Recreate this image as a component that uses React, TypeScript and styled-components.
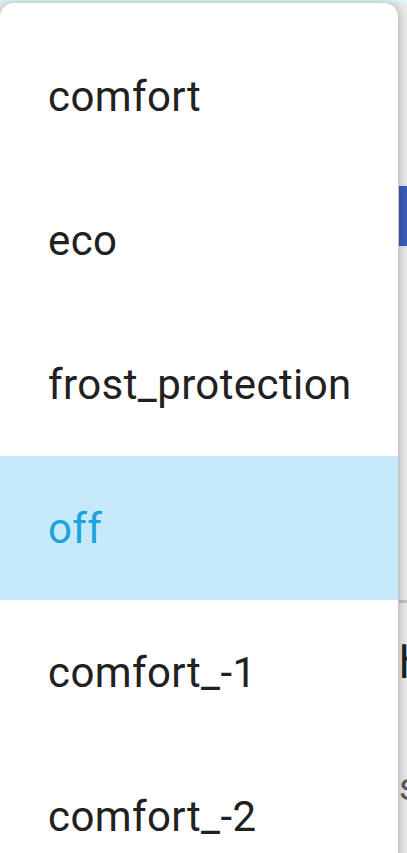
import styled, { createGlobalStyle } from 'styled-components'

const GlobalStyle = createGlobalStyle`
  html, body {
    margin: 0;
    padding: 0;
    height: 100%;
    overflow: hidden;
  }

  body {
    background-color: #ebebeb;
    font-family: Roboto, 'Noto Sans', sans-serif;
  }
`

const Page = styled.div`
  position: relative;
  width: 407px;
  height: 853px;
  overflow: hidden;
`

const TopEdge = styled.div`
  height: 2px;
  background-color: #dcf9fd;
`

const Underlay = styled.div`
  display: flex;
  flex-direction: column;
  padding-left: 399px;
`

const ActionButton = styled.div`
  margin-top: 184px;
  height: 60px;
  background-color: #3d5cbc;
`

const Divider = styled.div`
  margin-top: 354px;
  height: 3px;
  background-color: #c4c4c4;
`

interface LineProps {
  muted?: boolean
}

const Line = styled.div<LineProps>`
  white-space: nowrap;
  font-size: ${({ muted }) => (muted ? '38px' : '45px')};
  line-height: ${({ muted }) => (muted ? '60px' : '64px')};
  color: ${({ muted }) => (muted ? '#5a5a5a' : '#212121')};
  margin-top: ${({ muted }) => (muted ? '62px' : '28px')};
`

const Menu = styled.ul`
  position: absolute;
  top: 3px;
  left: 0;
  width: 398px;
  margin: 0;
  padding: 21px 0 0;
  list-style: none;
  background-color: #ffffff;
  border-radius: 14px 14px 0 0;
  box-shadow: 0 0 14px rgba(0, 0, 0, 0.22), 0 4px 8px rgba(0, 0, 0, 0.12);
`

interface MenuItemProps {
  selected?: boolean
}

const MenuItem = styled.li<MenuItemProps>`
  display: flex;
  align-items: center;
  height: 144px;
  padding: 0 48px;
  font-size: 42px;
  letter-spacing: 0.4px;
  color: ${({ selected }) => (selected ? '#1ba4df' : '#212121')};
  background-color: ${({ selected }) => (selected ? '#c6e9fb' : 'transparent')};
  white-space: nowrap;
`

const options = ['comfort', 'eco', 'frost_protection', 'off', 'comfort_-1', 'comfort_-2']

export default function App() {
  return (
    <Page>
      <GlobalStyle />
      <TopEdge />
      <Underlay>
        <ActionButton />
        <Divider />
        <Line>h</Line>
        <Line muted>s</Line>
      </Underlay>
      <Menu>
        {options.map((option) => (
          <MenuItem key={option} selected={option === 'off'}>
            {option}
          </MenuItem>
        ))}
      </Menu>
    </Page>
  )
}
